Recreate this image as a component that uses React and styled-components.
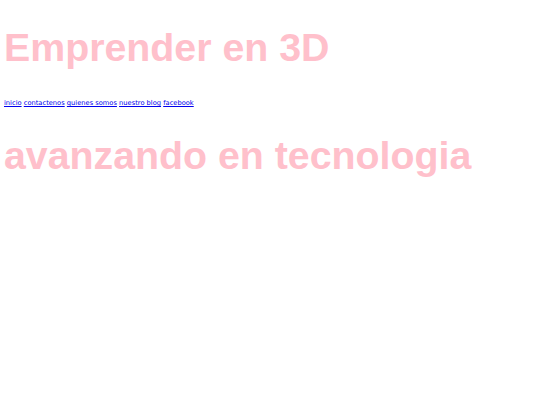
import React from "react";
import styled, { createGlobalStyle } from "styled-components";

const Global = createGlobalStyle`
  html, body { margin: 0; padding: 0; background: #ffffff; }
`;

const Page = styled.div`
  padding: 0 4px;
`;

const Title = styled.h1`
  margin: 25px 0 0 0;
  font-family: "Liberation Sans", Arial, sans-serif;
  font-weight: bold;
  font-size: 39.3px;
  line-height: 45px;
  color: pink;
`;

const Nav = styled.nav`
  margin-top: 28px;
  font-family: "DejaVu Sans", Verdana, sans-serif;
  font-size: 6.7px;
  line-height: 10px;
`;

const NavLink = styled.a`
  color: #0000ee;
  text-decoration: underline;
`;

const Subtitle = styled.h2`
  margin: 25px 0 0 0;
  font-family: "Liberation Sans", Arial, sans-serif;
  font-weight: bold;
  font-size: 39.3px;
  line-height: 45px;
  color: pink;
`;

const links = ["inicio", "contactenos", "quienes somos", "nuestro blog", "facebook"];

export default function App() {
  return (
    <>
      <Global />
      <Page>
        <Title>Emprender en 3D</Title>
        <Nav>
          {links.map((l, i) => (
            <React.Fragment key={l}>
              <NavLink href="#">{l}</NavLink>
              {i < links.length - 1 ? " " : null}
            </React.Fragment>
          ))}
        </Nav>
        <Subtitle>avanzando en tecnologia</Subtitle>
      </Page>
    </>
  );
}
